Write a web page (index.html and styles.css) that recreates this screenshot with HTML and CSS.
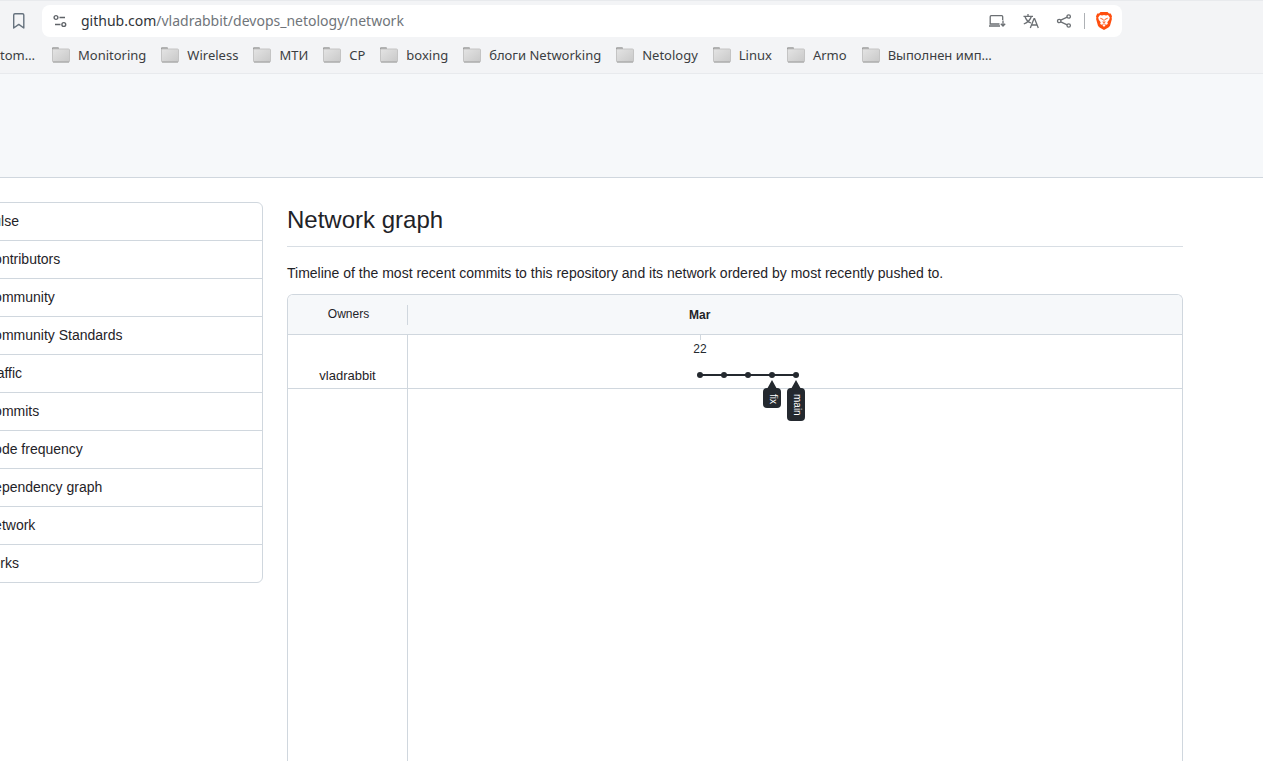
FILE: index.html
```html
<!DOCTYPE html>
<html lang="en">
<head>
<meta charset="utf-8">
<title>Network graph</title>
<link rel="stylesheet" href="styles.css">
</head>
<body>
<svg class="defs" aria-hidden="true">
  <defs>
    <linearGradient id="folder-fill" x1="0" y1="0" x2="1" y2="1">
      <stop offset="0" stop-color="#e4e4e4"/><stop offset="1" stop-color="#c8c8c8"/>
    </linearGradient>
    <symbol id="folder" viewBox="0 0 18 16">
      <path d="M0 3V1.300q0-1 1-1h5q1 0 1 1V3z" fill="#9c9c9c"/>
      <rect x=".5" y="2" width="17" height="13" rx="1" fill="url(#folder-fill)" stroke="#c4c4c4"/>
      <path d="M1 15h16" stroke="#a0a0a0"/>
    </symbol>
  </defs>
</svg>
<header class="browser">
  <div class="toolbar">
    <button class="icon-button bookmark" aria-label="Bookmark this page">
      <svg width="14" height="18" viewBox="0 0 14 18" fill="none" stroke="#66727e" stroke-width="1.4"><path d="M1.700 3q0-1.300 1.300-1.300h7.500q1.300 0 1.300 1.300v13l-5-3.600-5.100 3.600z" stroke-linejoin="round"/></svg>
    </button>
    <div class="address">
      <button class="icon-button" aria-label="Site information">
        <svg width="14" height="14" viewBox="0 0 14 14" fill="none" stroke="#5f6368" stroke-width="1.400"><circle cx="3" cy="3.500" r="1.900"/><path d="M6.500 3.500H12M2 10.500h5.500"/><circle cx="10.800" cy="10.500" r="1.900"/></svg>
      </button>
      <div class="url"><span class="host">github.com</span>/vladrabbit/devops_netology/network</div>
      <button class="icon-button" aria-label="Install app">
        <svg width="18" height="16" viewBox="0 0 18 16" fill="none" stroke="#6b6f73" stroke-width="1.300"><path d="M14.700 7V3.700q0-1-1-1H3.200q-1 0-1 1V11M1 13h11M1.500 11h10M15 7.500v5M12.800 10.800l2.200 2.200 2.200-2.200"/></svg>
      </button>
      <button class="icon-button" aria-label="Translate">
        <svg width="18" height="16" viewBox="0 0 18 16" fill="none" stroke="#6b6f73" stroke-width="1.300"><path d="M1.500 3.300h9.500M6 1v2.300M3 3.500q1.500 5 6 6.500M9.300 3.500Q8 8.500 1.800 11M8.300 15l3.700-9.300h.600L16.300 15M9.600 12h5.500"/></svg>
      </button>
      <button class="icon-button" aria-label="Share">
        <svg width="16" height="16" viewBox="0 0 16 16" fill="none" stroke="#6b6f73" stroke-width="1.300"><circle cx="3.200" cy="8" r="1.700"/><circle cx="12.700" cy="3.500" r="1.700"/><circle cx="12.700" cy="12.500" r="1.700"/><path d="M4.800 7.200l6.400-3M4.800 8.800l6.400 3"/></svg>
      </button>
      <span class="separator"></span>
      <button class="icon-button" aria-label="Brave Shields">
        <svg width="16" height="18" viewBox="0 0 16 18"><path d="M4.500 0h7l1.500 1.500h1.700L16 4.300l-.4 1.500.3 1.200-1.800 6.500q-.4 1.200-1.700 2.100L8 18l-4.400-2.400q-1.300-.9-1.700-2.100L.1 7l.3-1.200L0 4.300l1.300-2.800H3z" fill="#ff4f0f"/><path d="M4 3.100l2 .3 2-.5 2 .5 2-.3 1.800 2.300-.6 2.400-1.900 2.400.6 1.700-2.200 1.200L8 14.900l-1.700-1.800-2.200-1.200.6-1.700-1.900-2.400-.6-2.400z" fill="#fff"/><path d="M4.200 6.200l2.500.8-.7.900M11.800 6.200l-2.500.8.700.9M8 7v3M6.500 9.800L8 10.800l1.500-1M6.300 12.500L8 11.800l1.700.7" fill="none" stroke="#ff4f0f" stroke-width=".8"/></svg>
      </button>
    </div>
  </div>
  <nav class="bookmarks" aria-label="Bookmarks">
    <a href="#">tom…</a>
    <a href="#"><svg><use href="#folder"/></svg>Monitoring</a>
    <a href="#"><svg><use href="#folder"/></svg>Wireless</a>
    <a href="#"><svg><use href="#folder"/></svg>МТИ</a>
    <a href="#"><svg><use href="#folder"/></svg>CP</a>
    <a href="#"><svg><use href="#folder"/></svg>boxing</a>
    <a href="#"><svg><use href="#folder"/></svg>блоги Networking</a>
    <a href="#"><svg><use href="#folder"/></svg>Netology</a>
    <a href="#"><svg><use href="#folder"/></svg>Linux</a>
    <a href="#"><svg><use href="#folder"/></svg>Armo</a>
    <a href="#"><svg><use href="#folder"/></svg>Выполнен имп…</a>
  </nav>
</header>
<div class="repo-head"></div>
<div class="layout">
  <nav class="menu" aria-label="Insights">
    <a href="#">Pulse</a>
    <a href="#">Contributors</a>
    <a href="#">Community</a>
    <a href="#">Community Standards</a>
    <a href="#">Traffic</a>
    <a href="#">Commits</a>
    <a href="#">Code frequency</a>
    <a href="#">Dependency graph</a>
    <a href="#">Network</a>
    <a href="#">Forks</a>
  </nav>
  <main class="content">
    <h1>Network graph</h1>
    <p>Timeline of the most recent commits to this repository and its network ordered by most recently pushed to.</p>
    <section class="graph">
      <div class="graph-head">
        <div class="owners">Owners</div>
        <div class="month">Mar</div>
      </div>
      <div class="graph-row">
        <a class="owner" href="#">vladrabbit</a>
        <div class="lane">
          <svg class="commits" width="420" height="92" viewBox="0 0 420 92">
            <path d="M292.500 0v5" stroke="#d0d7de"/>
            <text class="day" x="292" y="18" text-anchor="middle">22</text>
            <path d="M292 40h96" stroke="#24292f" stroke-width="2"/>
            <g fill="#24292f">
              <circle cx="292" cy="40" r="3"/><circle cx="316" cy="40" r="3"/><circle cx="340" cy="40" r="3"/><circle cx="364" cy="40" r="3"/><circle cx="388" cy="40" r="3"/>
              <path d="M364 45l5 9h-10zM388 45l5 9h-10z"/>
              <rect x="355" y="53" width="18" height="20" rx="4"/>
              <rect x="379" y="53" width="18" height="33" rx="4"/>
            </g>
            <text class="branch" transform="translate(362 59) rotate(90)">fix</text>
            <text class="branch" transform="translate(386 59) rotate(90)">main</text>
          </svg>
        </div>
      </div>
      <div class="graph-rest"></div>
    </section>
  </main>
</div>
</body>
</html>
```
FILE: styles.css
```css
* { box-sizing: border-box; }
body {
  margin: 0;
  height: 100vh;
  display: flex;
  flex-direction: column;
  overflow: hidden;
  background: #fff;
  color: #1f2328;
  font: 14px/20px "Liberation Sans", Arial, sans-serif;
}
a { color: inherit; text-decoration: none; }
.defs { position: absolute; width: 0; height: 0; }
.browser {
  background: #f3f4f6;
  border-top: 1px solid #e8eaed;
  border-bottom: 1px solid #e8eaed;
  font-family: "Noto Sans", sans-serif;
}
.toolbar { display: flex; align-items: center; padding: 4px 141px 0 12px; }
.icon-button { display: flex; padding: 0; border: 0; background: none; }
.address {
  flex: 1;
  display: flex;
  align-items: center;
  gap: 16px;
  height: 32px;
  margin-left: 16px;
  padding: 0 10px 0 11px;
  border-radius: 8px;
  background: #fff;
}
.url { flex: 1; margin-left: -2px; color: #70757a; }
.host { color: #303438; }
.separator { width: 1px; height: 16px; margin: 0 -5px 0 -4px; background: #aeb1b5; }
.bookmarks {
  display: flex;
  gap: 15px;
  height: 36px;
  align-items: center;
  font-size: 13px;
  color: #3b3e42;
  white-space: nowrap;
}
.bookmarks a { display: flex; align-items: center; gap: 8px; }
.bookmarks a:first-child { padding-right: 2px; }
.bookmarks svg { width: 18px; height: 16px; }
.repo-head { height: 104px; background: #f6f8fa; border-bottom: 1px solid #d0d7de; flex: none; }
.layout {
  flex: 1;
  display: flex;
  gap: 24px;
  margin: 24px 80px 0 -33px;
}
.menu {
  width: 296px;
  flex: none;
  align-self: flex-start;
  border: 1px solid #d0d7de;
  border-radius: 6px;
}
.menu a { display: block; padding: 8px 16px 9px; border-bottom: 1px solid #d0d7de; }
.menu a:last-child { border-bottom: 0; }
.content { flex: 1; display: flex; flex-direction: column; }
h1 {
  margin: 0;
  padding-bottom: 8px;
  border-bottom: 1px solid #d8dee4;
  font-size: 24px;
  line-height: 36px;
  font-weight: 400;
}
p { margin: 16px 0 11px; }
.graph {
  flex: 1;
  display: flex;
  flex-direction: column;
  border: 1px solid #d0d7de;
  border-bottom: 0;
  border-radius: 6px 6px 0 0;
  font-size: 12px;
}
.graph-head {
  display: flex;
  align-items: center;
  height: 40px;
  background: #f6f8fa;
  border-bottom: 1px solid #d0d7de;
  border-radius: 5px 5px 0 0;
}
.owners {
  width: 120px;
  height: 20px;
  padding-left: 2px;
  border-right: 1px solid #d0d7de;
  line-height: 18px;
  text-align: center;
}
.month { padding-left: 281px; font-weight: 700; }
.graph-row { display: flex; height: 54px; border-bottom: 1px solid #d0d7de; }
.owner {
  display: flex;
  align-items: flex-end;
  justify-content: center;
  width: 120px;
  padding-bottom: 2px;
  border-right: 1px solid #d0d7de;
  font-size: 13px;
}
.lane { position: relative; flex: 1; }
.commits { position: absolute; top: 0; left: 0; }
.day { font-size: 12px; fill: #24292f; }
.branch { font-size: 10px; fill: #fff; }
.graph-rest { flex: 1; width: 120px; border-right: 1px solid #d0d7de; }
```
